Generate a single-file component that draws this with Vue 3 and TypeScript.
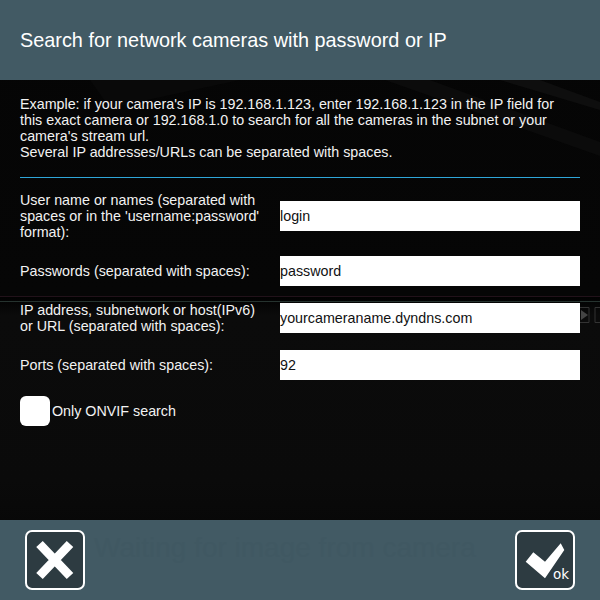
<script setup lang="ts">
interface Field { label: string; value: string }
const fields: Field[] = [
  { label: "User name or names (separated with spaces or in the 'username:password' format):", value: 'login' },
  { label: 'Passwords (separated with spaces):', value: 'password' },
  { label: 'IP address, subnetwork or host(IPv6) or URL (separated with spaces):', value: 'yourcameraname.dyndns.com' },
  { label: 'Ports (separated with spaces):', value: '92' },
]
</script>

<template>
  <div class="screen">
    <div class="backdrop" aria-hidden="true">
      <svg class="streaks" width="600" height="120" viewBox="0 0 600 120">
        <path d="M90 0L240 0L110 28Z" fill="#090909" />
        <path d="M385 0L430 0L600 62L600 76Z" fill="#0b0b0b" />
        <path d="M500 0L540 0L600 22L600 30Z" fill="#0e0e0e" />
      </svg>
      <div class="stripe stripe-red"></div>
      <div class="stripe stripe-green"></div>
      <svg class="player" width="30" height="16" viewBox="0 0 30 16">
        <path d="M1 .5H10V15.500H1" fill="none" stroke="#333" />
        <path d="M2 3L9 8L2 13Z" fill="#444" />
        <path d="M16 .5H30V15.500H16Z" fill="none" stroke="#333" />
      </svg>
    </div>
    <header class="title-bar"><h1>Search for network cameras with password or IP</h1></header>
    <main class="content">
      <p class="intro">
        Example: if your camera's IP is 192.168.1.123, enter 192.168.1.123 in the IP field for this exact camera or
        192.168.1.0 to search for all the cameras in the subnet or your camera's stream url.<br />
        Several IP addresses/URLs can be separated with spaces.
      </p>
      <div class="divider"></div>
      <div class="form">
        <div v-for="field in fields" :key="field.value" class="row">
          <div class="label-cell"><label class="label">{{ field.label }}</label></div>
          <input class="input" type="text" :value="field.value" />
        </div>
        <label class="check-row">
          <span class="check"></span>
          <span>Only ONVIF search</span>
        </label>
      </div>
    </main>
    <footer class="footer">
      <span class="waiting">Waiting for image from camera</span>
      <button class="action" type="button" aria-label="Cancel">
        <svg width="56" height="56" viewBox="0 0 56 56">
          <path d="M12.500 12L43 44M43 12L12.500 44" fill="none" stroke="#fff" stroke-width="9" />
        </svg>
      </button>
      <button class="action" type="button" aria-label="OK">
        <svg width="56" height="56" viewBox="0 0 56 56">
          <path d="M8.700 29.700L16.300 20.300L28 29.700L43.700 11.300L47.300 18L28 46.300Z" fill="#fff" />
        </svg>
        <span class="ok">ok</span>
      </button>
    </footer>
  </div>
</template>

<style scoped>
.screen {
  position: relative;
  width: 600px;
  height: 600px;
  display: flex;
  flex-direction: column;
  overflow: hidden;
  background: linear-gradient(#050505 0, #060606 296px, #020202 297px, #0b0b0b 316px, #0a0a0a 480px, #050505 100%);
  color: #fff;
  font-family: "Liberation Sans", Arial, sans-serif;
}
.backdrop {
  position: absolute;
  inset: 0;
  pointer-events: none;
}
.streaks {
  position: absolute;
  left: 0;
  top: 80px;
}
.stripe {
  position: absolute;
  left: 0;
  right: 0;
  height: 1px;
}
.stripe-red { top: 296px; background: #22121a; }
.stripe-green { top: 301px; background: #26332f; }
.player {
  position: absolute;
  left: 579px;
  top: 307px;
}
.title-bar {
  position: relative;
  height: 80px;
  flex: none;
  display: flex;
  align-items: center;
  padding: 0 20px;
  background: #425a64;
}
.title-bar h1 {
  margin: 0;
  font-size: 19.850px;
  font-weight: 400;
  line-height: 22px;
  white-space: nowrap;
}
.content {
  position: relative;
  flex: 1;
  padding: 16px 20px 0;
}
.intro {
  margin: 0;
  font-size: 14.300px;
  line-height: 16px;
  color: #f2f2f2;
}
.divider {
  height: 1px;
  margin: 17px 0 14px;
  background: #2ea6d8;
}
.form {
  display: flex;
  flex-direction: column;
  gap: 16px;
}
.row {
  display: flex;
  align-items: center;
}
.label-cell {
  width: 260px;
  flex: none;
}
.label {
  display: block;
  width: 242px;
  font-size: 14.300px;
  line-height: 16px;
  color: #f2f2f2;
}
.input {
  box-sizing: border-box;
  width: 300px;
  height: 30px;
  padding: 0;
  border: 0;
  border-radius: 0;
  outline: 0;
  background: #fff;
  color: #111;
  font: 14.300px "Liberation Sans", Arial, sans-serif;
}
.check-row {
  display: flex;
  align-items: center;
  gap: 2px;
  font-size: 14.300px;
  color: #f2f2f2;
}
.check {
  width: 30px;
  height: 30px;
  border-radius: 6px;
  background: #fff;
}
.footer {
  position: relative;
  height: 80px;
  flex: none;
  display: flex;
  align-items: center;
  justify-content: space-between;
  padding: 0 25px;
  background: #425a64;
}
.waiting {
  position: absolute;
  left: 94px;
  top: 12px;
  font-size: 28px;
  line-height: 32px;
  white-space: nowrap;
  color: #405862;
}
.action {
  position: relative;
  box-sizing: border-box;
  width: 60px;
  height: 60px;
  padding: 0;
  display: flex;
  border: 2px solid #fff;
  border-radius: 7px;
  background: #2d3b41;
  color: #fff;
}
.ok {
  position: absolute;
  right: 4px;
  bottom: 6px;
  font-size: 13.500px;
  line-height: 16px;
  font-family: "DejaVu Sans", sans-serif;
}
</style>

<style>
html, body { background: #0a0a0a; }
</style>
